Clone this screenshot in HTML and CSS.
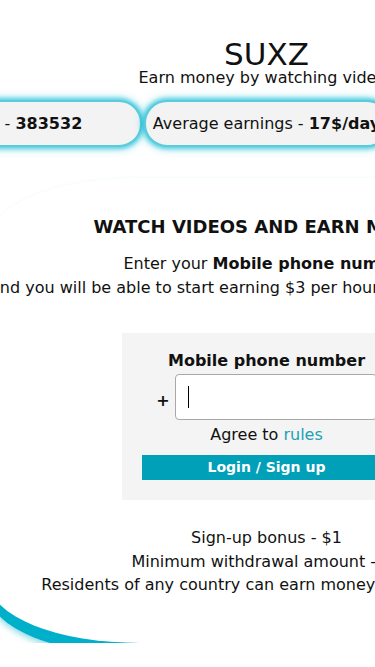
FILE: index.html
```html
<!DOCTYPE html>
<html lang="en">
<head>
<meta charset="utf-8">
<meta name="viewport" content="width=device-width, initial-scale=1">
<title>SUXZ</title>
<link rel="stylesheet" href="styles.css">
</head>
<body>
<div class="page">
  <header class="head">
    <h1 class="logo">SUXZ</h1>
    <p class="tagline">Earn money by watching videos</p>
    <div class="stats">
      <div class="stat"><span class="stat-text">Users - <b>383532</b></span></div>
      <div class="stat"><span class="stat-text">Average earnings - <b>17$/day</b></span></div>
      <div class="stat"><span class="stat-text">Paid out - <b>92741$</b></span></div>
    </div>
  </header>
  <main class="card">
    <h2 class="headline">WATCH VIDEOS AND EARN MONEY</h2>
    <p class="intro">
      <span class="line">Enter your <b>Mobile phone number</b></span>
      <span class="line line-long">and you will be able to start earning $3 per hour watching videos</span>
    </p>
    <form class="login">
      <label class="login-label" for="phone">Mobile phone number</label>
      <div class="phone-row">
        <span class="plus">+</span>
        <span class="field"><input id="phone" class="phone-input" type="tel"></span>
      </div>
      <p class="agree">Agree to <a href="#" class="rules">rules</a></p>
      <button class="submit" type="button">Login / Sign up</button>
    </form>
    <ul class="facts">
      <li>Sign-up bonus - $1</li>
      <li>Minimum withdrawal amount - $5</li>
      <li>Residents of any country can earn money with us online</li>
    </ul>
  </main>
</div>
</body>
</html>
```

FILE: styles.css
```css
html, body {
  margin: 0;
  padding: 0;
  overflow-x: hidden;
  background: #ffffff;
}
body {
  font-family: "DejaVu Sans", "Liberation Sans", sans-serif;
  font-size: 16px;
  color: #111111;
}
.page {
  width: 553px;
  margin-left: -10px;
}
.head {
  padding-top: 40px;
  text-align: center;
}
.logo {
  margin: 0;
  font-size: 31px;
  font-weight: normal;
  line-height: 29px;
}
.tagline {
  margin: 0;
  font-size: 16px;
  line-height: 17px;
  white-space: nowrap;
}
.stats {
  display: flex;
  justify-content: center;
  gap: 2px;
  margin-top: 14px;
}
.stat {
  flex: none;
  box-sizing: border-box;
  width: 246px;
  height: 47px;
  display: flex;
  align-items: center;
  justify-content: center;
  white-space: nowrap;
  background: #f3f3f3;
  border: 2px solid #5ccbdc;
  border-radius: 23px;
  box-shadow: 0 0 4px 2px rgba(0, 182, 210, 0.6), 0 0 8px 3px rgba(0, 190, 215, 0.25);
}
.stat-text {
  display: block;
}
.card {
  display: block;
  margin-top: 31px;
  padding: 38px 0 46px;
  background: #ffffff;
  border-radius: 150px / 60px;
  box-shadow: 0 12px 0 #00b0ca, 0 15px 6px rgba(0, 176, 202, 0.45), 0 -1px 3px rgba(0, 170, 190, 0.05);
  text-align: center;
}
.headline {
  margin: 0;
  font-size: 18px;
  font-weight: bold;
  line-height: 21px;
  white-space: nowrap;
}
.intro {
  margin: 15px 0 0;
  line-height: 23.5px;
}
.line {
  display: block;
  white-space: nowrap;
}
.line-long {
  text-align: left;
}
.login {
  width: 290px;
  box-sizing: border-box;
  margin: 34px auto 0;
  padding: 18px 20px 20px;
  background: #f4f4f4;
  display: flex;
  flex-direction: column;
  align-items: center;
}
.login-label {
  display: block;
  font-weight: bold;
  line-height: 19px;
  white-space: nowrap;
}
.phone-row {
  display: flex;
  align-items: center;
  gap: 5px;
  margin-top: 4px;
}
.plus {
  font-weight: bold;
  font-size: 16px;
  line-height: 19px;
  padding-top: 6px;
}
.field {
  position: relative;
  display: block;
}
.field::after {
  content: "";
  position: absolute;
  left: 13px;
  top: 12px;
  width: 1px;
  height: 22px;
  background: #000000;
}
.phone-input {
  display: block;
  box-sizing: border-box;
  width: 202px;
  height: 46px;
  margin: 0;
  padding: 0 12px;
  border: 1px solid #a8a8a8;
  border-radius: 4px;
  background: #ffffff;
  font: inherit;
  outline: none;
}
.agree {
  margin: 4.5px 0 0;
  line-height: 19px;
}
.rules {
  color: #1aa2b6;
  text-decoration: none;
}
.submit {
  display: block;
  width: 250px;
  height: 25px;
  margin-top: 11.5px;
  padding: 0;
  border: none;
  background: #00a0b9;
  color: #ffffff;
  font-family: "DejaVu Sans", "Liberation Sans", sans-serif;
  font-size: 14px;
  font-weight: bold;
  line-height: 25px;
}
.facts {
  list-style: none;
  margin: 26px 0 0;
  padding: 0;
  line-height: 23.5px;
}
.facts li {
  white-space: nowrap;
}
```
